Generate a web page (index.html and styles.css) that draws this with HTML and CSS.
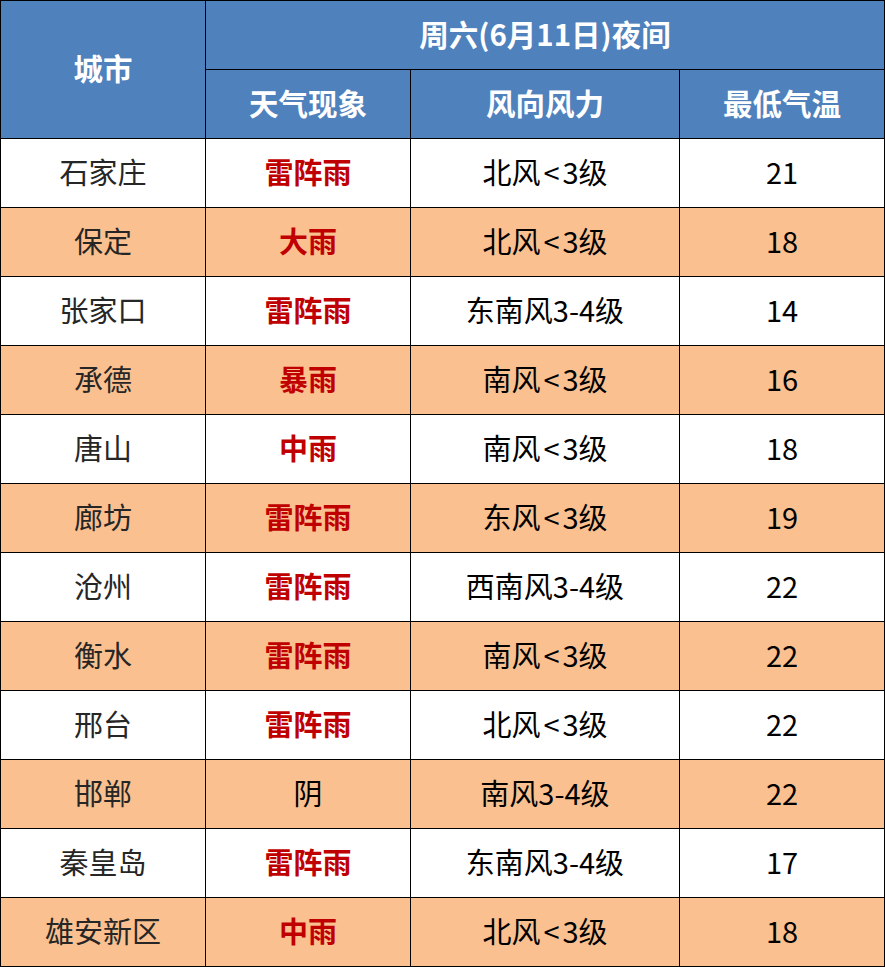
FILE: index.html
```html
<!DOCTYPE html>
<html lang="zh-CN">
<head>
<meta charset="utf-8">
<title>天气预报</title>
<link rel="stylesheet" href="styles.css">
</head>
<body>
<table class="wx">
  <colgroup>
    <col class="c1"><col class="c2"><col class="c3"><col class="c4">
  </colgroup>
  <thead>
    <tr>
      <th rowspan="2">城市</th>
      <th colspan="3">周六(6月11日)夜间</th>
    </tr>
    <tr>
      <th>天气现象</th>
      <th>风向风力</th>
      <th>最低气温</th>
    </tr>
  </thead>
  <tbody>
    <tr><td class="city">石家庄</td><td class="wea">雷阵雨</td><td>北风<span class="lt">&lt;</span>3级</td><td>21</td></tr>
    <tr class="alt"><td class="city">保定</td><td class="wea">大雨</td><td>北风<span class="lt">&lt;</span>3级</td><td>18</td></tr>
    <tr><td class="city">张家口</td><td class="wea">雷阵雨</td><td>东南风3-4级</td><td>14</td></tr>
    <tr class="alt"><td class="city">承德</td><td class="wea">暴雨</td><td>南风<span class="lt">&lt;</span>3级</td><td>16</td></tr>
    <tr><td class="city">唐山</td><td class="wea">中雨</td><td>南风<span class="lt">&lt;</span>3级</td><td>18</td></tr>
    <tr class="alt"><td class="city">廊坊</td><td class="wea">雷阵雨</td><td>东风<span class="lt">&lt;</span>3级</td><td>19</td></tr>
    <tr><td class="city">沧州</td><td class="wea">雷阵雨</td><td>西南风3-4级</td><td>22</td></tr>
    <tr class="alt"><td class="city">衡水</td><td class="wea">雷阵雨</td><td>南风<span class="lt">&lt;</span>3级</td><td>22</td></tr>
    <tr><td class="city">邢台</td><td class="wea">雷阵雨</td><td>北风<span class="lt">&lt;</span>3级</td><td>22</td></tr>
    <tr class="alt"><td class="city">邯郸</td><td class="wea plain">阴</td><td>南风3-4级</td><td>22</td></tr>
    <tr><td class="city">秦皇岛</td><td class="wea">雷阵雨</td><td>东南风3-4级</td><td>17</td></tr>
    <tr class="alt"><td class="city">雄安新区</td><td class="wea">中雨</td><td>北风<span class="lt">&lt;</span>3级</td><td>18</td></tr>
  </tbody>
</table>
</body>
</html>
```
FILE: styles.css
```css
html, body {
  margin: 0;
  padding: 0;
  background: #ffffff;
}
.wx {
  border-collapse: collapse;
  table-layout: fixed;
  width: 885px;
  font-family: "Noto Sans CJK SC", "Noto Sans", sans-serif;
  font-size: 29px;
  color: #000000;
}
.c1 { width: 205px; }
.c2 { width: 205px; }
.c3 { width: 269px; }
.c4 { width: 205px; }
.wx th, .wx td {
  border: 1px solid #000000;
  height: 65px;
  padding: 0 0 3px 0;
  text-align: center;
  vertical-align: middle;
  line-height: 1;
}
.wx th {
  background: #4f81bd;
  color: #ffffff;
  font-weight: 700;
  font-size: 29.5px;
}
.wx td.city { color: #262626; }
.wx td.wea { color: #c00000; font-weight: 700; }
.wx td.wea.plain { color: #000000; font-weight: 400; }
.wx tr.alt td { background: #fac090; }
.lt { margin: 0 3px; }
```
